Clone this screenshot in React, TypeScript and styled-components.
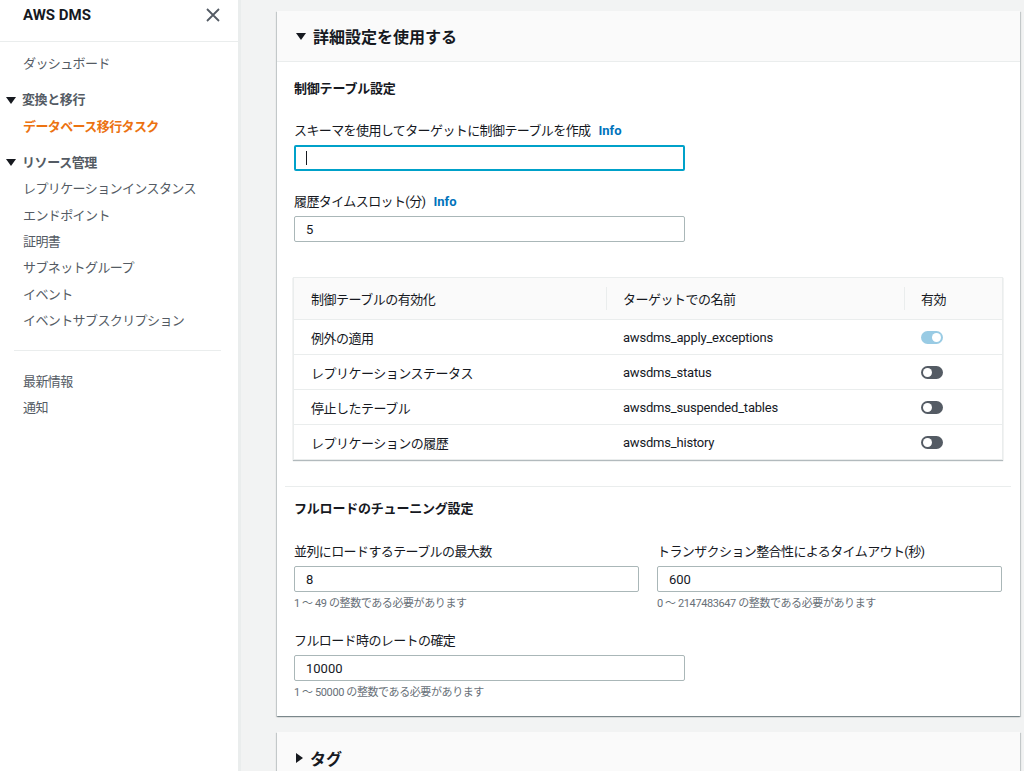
import styled, { createGlobalStyle } from "styled-components";

const GlobalStyle = createGlobalStyle`
  html, body {
    margin: 0;
    padding: 0;
    background: #f2f3f3;
    font-family: Roboto, "Noto Sans CJK JP", "Liberation Sans", sans-serif;
    color: #16191f;
  }
  * { box-sizing: border-box; }
`;

const Layout = styled.div`
  display: flex;
  width: 1024px;
  height: 771px;
  overflow: hidden;
`;

const Sidebar = styled.aside`
  width: 241px;
  flex-shrink: 0;
  background: #fff;
  border-right: 3px solid #eaeded;
`;

const SideHeader = styled.div`
  height: 42px;
  display: flex;
  align-items: flex-start;
  justify-content: space-between;
  padding: 5px 18px 0 23px;
  border-bottom: 1px solid #eaeded;
`;

const SideTitle = styled.div`
  font-size: 15px;
  font-weight: 700;
  line-height: 20px;
  color: #16191f;
`;

const CloseBtn = styled.div`
  color: #545b64;
  line-height: 0;
  padding-top: 3px;
`;

const Nav = styled.nav`
  padding-top: 9px;
`;

const NavItem = styled.div<{ $active?: boolean }>`
  font-size: 13px;
  line-height: 18px;
  padding: 4.2px 0 4.2px 23px;
  color: ${(p) => (p.$active ? "#ec7211" : "#545b64")};
  font-weight: ${(p) => (p.$active ? 700 : 400)};
  letter-spacing: -0.6px;
`;

const NavSection = styled.div`
  font-size: 13px;
  line-height: 18px;
  font-weight: 700;
  color: #545b64;
  margin-top: 9.8px;
  padding: 4.2px 0 4.2px 6px;
  display: flex;
  align-items: center;
  gap: 6px;
  letter-spacing: -0.4px;
`;

const Caret = styled.span<{ $open?: boolean }>`
  display: inline-block;
  width: 0;
  height: 0;
  ${(p) =>
    p.$open
      ? `border-left: 5px solid transparent; border-right: 5px solid transparent; border-top: 7px solid #16191f;`
      : `border-top: 5px solid transparent; border-bottom: 5px solid transparent; border-left: 7px solid #16191f;`}
`;

const NavDivider = styled.hr`
  border: none;
  border-top: 1px solid #eaeded;
  margin: 16px 17px 17px 14px;
`;

const Main = styled.main`
  flex: 1;
  padding: 11px 4px 0 36px;
  display: flex;
  flex-direction: column;
  gap: 16px;
`;

const Card = styled.section`
  background: #fff;
  box-shadow: 0 1px 1px 0 rgba(0, 28, 36, 0.3), 1px 1px 1px 0 rgba(0, 28, 36, 0.15),
    -1px 1px 1px 0 rgba(0, 28, 36, 0.15);
`;

const CardHeader = styled.div<{ $bordered?: boolean }>`
  height: 51px;
  background: #fafafa;
  border-bottom: ${(p) => (p.$bordered ? "1px solid #eaeded" : "none")};
  display: flex;
  align-items: center;
  gap: 7px;
  padding-left: 19px;
  font-size: 16px;
  font-weight: 700;
  color: #16191f;
`;

const CardBody = styled.div`
  padding: 18px 18px 17px 17px;
`;

const SubHeading = styled.h3`
  margin: 0;
  font-size: 13px;
  line-height: 17px;
  font-weight: 700;
  letter-spacing: -0.2px;
`;

const Field = styled.div<{ $width?: string }>`
  width: ${(p) => p.$width || "100%"};
`;

const Label = styled.div`
  font-size: 13px;
  line-height: 18px;
  color: #16191f;
  margin-bottom: 5px;
  letter-spacing: -0.6px;
`;

const InfoLink = styled.span`
  color: #0073bb;
  font-weight: 700;
  margin-left: 8px;
  letter-spacing: 0;
`;

const Input = styled.div<{ $focused?: boolean }>`
  height: 26px;
  border: ${(p) => (p.$focused ? "2px solid #00a1c9" : "1px solid #aab7b8")};
  border-radius: 2px;
  display: flex;
  align-items: center;
  padding-left: ${(p) => (p.$focused ? "10px" : "11px")};
  font-size: 13px;
  color: #16191f;
`;

const Cursor = styled.span`
  width: 1px;
  height: 14px;
  background: #16191f;
`;

const Hint = styled.div`
  font-size: 11px;
  line-height: 12px;
  color: #687078;
  margin-top: 6px;
  letter-spacing: -0.4px;
`;

const Stack = styled.div<{ $gap: number; $top?: number }>`
  display: flex;
  flex-direction: column;
  gap: ${(p) => p.$gap}px;
  margin-top: ${(p) => p.$top ?? 0}px;
`;

const Row2 = styled.div`
  display: grid;
  grid-template-columns: 1fr 1fr;
  column-gap: 18px;
`;

const Table = styled.div`
  margin: 35px -1px 0 -1px;
  border: 1px solid #eaeded;
  border-bottom: none;
  box-shadow: 0 1px 1px 0 rgba(0, 28, 36, 0.3);
`;

const TRow = styled.div<{ $head?: boolean }>`
  display: grid;
  grid-template-columns: 312px 298px 1fr;
  height: ${(p) => (p.$head ? "42px" : "35px")};
  background: ${(p) => (p.$head ? "#fafafa" : "#fff")};
  border-bottom: 1px solid #eaeded;
  align-items: center;
  font-size: 13px;
`;

const Cell = styled.div<{ $divider?: boolean }>`
  padding-left: 17px;
  height: 100%;
  display: flex;
  align-items: center;
  letter-spacing: -0.5px;
  position: relative;
  ${(p) =>
    p.$divider
      ? `&::before { content: ""; position: absolute; left: 0; top: 9px; bottom: 9px; border-left: 1px solid #eaeded; }`
      : ""}
`;

const Mono = styled.span`
  letter-spacing: -0.2px;
`;

const Toggle = styled.span<{ $on?: boolean }>`
  width: 22px;
  height: 13px;
  border-radius: 7px;
  background: ${(p) => (p.$on ? "#99cbe4" : "#545b64")};
  position: relative;
  &::after {
    content: "";
    position: absolute;
    top: 2px;
    ${(p) => (p.$on ? "right: 2px;" : "left: 2px;")}
    width: 9px;
    height: 9px;
    border-radius: 50%;
    background: #fff;
  }
`;

const Divider = styled.hr`
  border: none;
  border-top: 1px solid #eaeded;
  margin: 26px -9px 13px -9px;
`;

const rows = [
  { name: "例外の適用", target: "awsdms_apply_exceptions", on: true },
  { name: "レプリケーションステータス", target: "awsdms_status", on: false },
  { name: "停止したテーブル", target: "awsdms_suspended_tables", on: false },
  { name: "レプリケーションの履歴", target: "awsdms_history", on: false },
];

const resourceItems = [
  "レプリケーションインスタンス",
  "エンドポイント",
  "証明書",
  "サブネットグループ",
  "イベント",
  "イベントサブスクリプション",
];

export default function App() {
  return (
    <Layout>
      <GlobalStyle />
      <Sidebar>
        <SideHeader>
          <SideTitle>AWS DMS</SideTitle>
          <CloseBtn>
            <svg width="14" height="14" viewBox="0 0 14 14">
              <path d="M1 1 L13 13 M13 1 L1 13" stroke="#545b64" strokeWidth="1.8" />
            </svg>
          </CloseBtn>
        </SideHeader>
        <Nav>
          <NavItem>ダッシュボード</NavItem>
          <NavSection>
            <Caret $open />
            変換と移行
          </NavSection>
          <NavItem $active>データベース移行タスク</NavItem>
          <NavSection>
            <Caret $open />
            リソース管理
          </NavSection>
          {resourceItems.map((item) => (
            <NavItem key={item}>{item}</NavItem>
          ))}
          <NavDivider />
          <NavItem>最新情報</NavItem>
          <NavItem>通知</NavItem>
        </Nav>
      </Sidebar>

      <Main>
        <Card>
          <CardHeader $bordered>
            <Caret $open />
            詳細設定を使用する
          </CardHeader>
          <CardBody>
            <SubHeading>制御テーブル設定</SubHeading>
            <Stack $gap={22} $top={25}>
              <Field $width="391px">
                <Label>
                  スキーマを使用してターゲットに制御テーブルを作成
                  <InfoLink>Info</InfoLink>
                </Label>
                <Input $focused>
                  <Cursor />
                </Input>
              </Field>
              <Field $width="391px">
                <Label>
                  履歴タイムスロット(分)
                  <InfoLink>Info</InfoLink>
                </Label>
                <Input>5</Input>
              </Field>
            </Stack>

            <Table>
              <TRow $head>
                <Cell>制御テーブルの有効化</Cell>
                <Cell $divider>ターゲットでの名前</Cell>
                <Cell $divider>有効</Cell>
              </TRow>
              {rows.map((r) => (
                <TRow key={r.target}>
                  <Cell>{r.name}</Cell>
                  <Cell>
                    <Mono>{r.target}</Mono>
                  </Cell>
                  <Cell>
                    <Toggle $on={r.on} />
                  </Cell>
                </TRow>
              ))}
            </Table>

            <Divider />
            <SubHeading>フルロードのチューニング設定</SubHeading>
            <Stack $gap={22} $top={26}>
              <Row2>
                <Field>
                  <Label>並列にロードするテーブルの最大数</Label>
                  <Input>8</Input>
                  <Hint>1 ～ 49 の整数である必要があります</Hint>
                </Field>
                <Field>
                  <Label>トランザクション整合性によるタイムアウト(秒)</Label>
                  <Input>600</Input>
                  <Hint>0 ～ 2147483647 の整数である必要があります</Hint>
                </Field>
              </Row2>
              <Field $width="391px">
                <Label>フルロード時のレートの確定</Label>
                <Input>10000</Input>
                <Hint>1 ～ 50000 の整数である必要があります</Hint>
              </Field>
            </Stack>
          </CardBody>
        </Card>

        <Card>
          <CardHeader>
            <Caret />
            タグ
          </CardHeader>
        </Card>
      </Main>
    </Layout>
  );
}
